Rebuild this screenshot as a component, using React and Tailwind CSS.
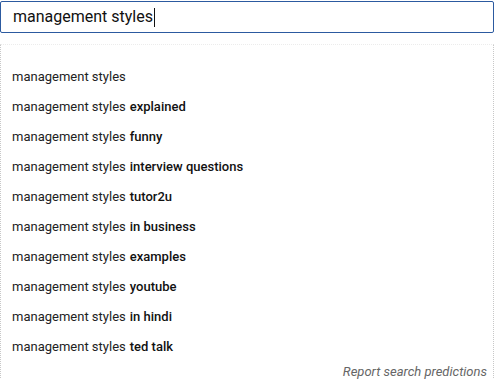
import React from 'react';

const suggestions = [
  [''],
  ['explained'],
  ['funny'],
  ['interview questions'],
  ['tutor2u'],
  ['in business'],
  ['examples'],
  ['youtube'],
  ['in hindi'],
  ['ted talk'],
];

export default function App() {
  return (
    <div className="w-[494px] h-[379px] overflow-hidden bg-white font-['Roboto',sans-serif]">
      {/* search box */}
      <div className="mt-px h-[32px] border border-[#2c5aa0] rounded-[2px] flex items-center pl-[12px]">
        <span className="text-[16px] text-[#111] leading-none">management styles</span>
        <span className="ml-px w-px h-[19px] bg-[#111]" />
      </div>

      {/* predictions */}
      <div className="mt-[11px] border-t border-dotted border-t-[#ececec] border-x border-x-[#c8c8c8] h-[400px] pt-[17px]">
        {suggestions.map((s, i) => (
          <div key={i} className="h-[30px] flex items-center pl-[11px] text-[13px] text-[#222]">
            management styles
            {s[0] ? <span className="ml-[4px] font-medium text-[#111]">{s[0]}</span> : null}
          </div>
        ))}
        <div className="flex justify-end pr-[6px] text-[13px] italic text-[#666]">
          Report search predictions
        </div>
      </div>
    </div>
  );
}
